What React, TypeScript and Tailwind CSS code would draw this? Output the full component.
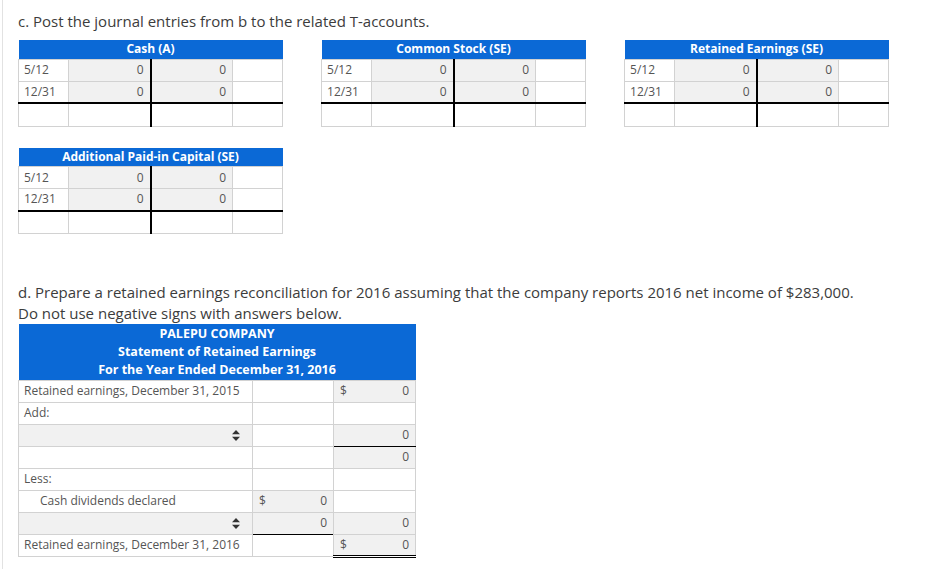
import React from "react";

const cellB = "border border-[#d2d2d2]";

// T-account: header + two posting rows + total row
function TAccount({ title }: { title: string }) {
  return (
    <table className="w-[264px] table-fixed border-collapse text-[12px] text-[#555]">
      <colgroup>
        <col className="w-[50px]" />
        <col className="w-[82px]" />
        <col className="w-[82px]" />
        <col className="w-[50px]" />
      </colgroup>
      <thead>
        <tr>
          <th colSpan={4} className="h-[19px] bg-[#0b69d6] p-0 text-center text-[12px] font-bold text-white">
            {title}
          </th>
        </tr>
      </thead>
      <tbody>
        {["5/12", "12/31"].map((d) => (
          <tr key={d} className="h-[22px]">
            <td className={`${cellB} pl-[5px]`}>{d}</td>
            <td className={`${cellB} border-r-2 border-r-black bg-[#f1f1f1] pr-[6px] text-right`}>0</td>
            <td className={`${cellB} bg-[#f1f1f1] pr-[6px] text-right`}>0</td>
            <td className={cellB}></td>
          </tr>
        ))}
        <tr className="h-[23px]">
          <td className={`${cellB} border-t-2 border-t-black`}></td>
          <td className={`${cellB} border-t-2 border-t-black border-r-2 border-r-black`}></td>
          <td className={`${cellB} border-t-2 border-t-black`}></td>
          <td className={`${cellB} border-t-2 border-t-black`}></td>
        </tr>
      </tbody>
    </table>
  );
}

function UpDown() {
  return (
    <svg viewBox="0 0 8 11" className="h-[11px] w-[8px]" fill="#333">
      <path d="M4 0 8 4.3H0Z" />
      <path d="M4 11 8 6.7H0Z" />
    </svg>
  );
}

type Cell = { text?: string; dollar?: boolean; gray?: boolean; line?: "single" | "double" };
type Row = { label?: string; indent?: boolean; select?: boolean; c2: Cell; c3: Cell };

const rows: Row[] = [
  { label: "Retained earnings, December 31, 2015", c2: {}, c3: { text: "0", dollar: true, gray: true } },
  { label: "Add:", c2: {}, c3: {} },
  { select: true, c2: {}, c3: { text: "0", gray: true, line: "single" } },
  { label: "", c2: {}, c3: { text: "0", gray: true } },
  { label: "Less:", c2: {}, c3: {} },
  { label: "Cash dividends declared", indent: true, c2: { text: "0", dollar: true, gray: true }, c3: {} },
  { select: true, c2: { text: "0", gray: true, line: "single" }, c3: { text: "0", gray: true } },
  { label: "Retained earnings, December 31, 2016", c2: {}, c3: { text: "0", dollar: true, gray: true, line: "double" } },
];

function AmountCell({ c }: { c: Cell }) {
  const line =
    c.line === "single"
      ? "border-b border-b-black"
      : c.line === "double"
        ? "border-b-[3px] border-double border-b-black"
        : "";
  return (
    <td className={`${cellB} ${line} ${c.gray ? "bg-[#f1f1f1]" : ""} px-[6px]`}>
      <div className="flex items-center justify-between">
        <span>{c.dollar ? "$" : ""}</span>
        <span>{c.text ?? ""}</span>
      </div>
    </td>
  );
}

function Statement() {
  return (
    <table className="w-[397px] table-fixed border-collapse text-[12px] text-[#555]">
      <colgroup>
        <col className="w-[234px]" />
        <col className="w-[81px]" />
        <col className="w-[82px]" />
      </colgroup>
      <thead>
        <tr>
          <th colSpan={3} className="h-[56px] bg-[#0b69d6] p-0 text-center text-[12.5px] font-bold leading-[18px] text-white">
            <div>PALEPU COMPANY</div>
            <div>Statement of Retained Earnings</div>
            <div>For the Year Ended December 31, 2016</div>
          </th>
        </tr>
      </thead>
      <tbody>
        {rows.map((r, i) => (
          <tr key={i} className="h-[22px]">
            {r.select ? (
              <td className={`${cellB} bg-[#f1f1f1] pr-[12px]`}>
                <div className="flex justify-end">
                  <UpDown />
                </div>
              </td>
            ) : (
              <td className={`${cellB} ${r.indent ? "pl-[21px]" : "pl-[5px]"} whitespace-nowrap`}>{r.label}</td>
            )}
            <AmountCell c={r.c2} />
            <AmountCell c={r.c3} />
          </tr>
        ))}
      </tbody>
    </table>
  );
}

export default function App() {
  return (
    <div className="h-[569px] w-[951px] overflow-hidden bg-white" style={{ fontFamily: '"Open Sans", sans-serif' }}>
      <div className="ml-[2px] h-full border-l border-[#e2e2e2] pl-[15px] pt-[11px] text-[#3c3c3c]">
        <p className="text-[15px] leading-[21px]">c. Post the journal entries from b to the related T-accounts.</p>
        <div className="mt-[8px] flex gap-[38px]">
          <TAccount title="Cash (A)" />
          <TAccount title="Common Stock (SE)" />
          <TAccount title="Retained Earnings (SE)" />
        </div>
        <div className="mt-[21px]">
          <TAccount title="Additional Paid-in Capital (SE)" />
        </div>
        <p className="mt-[48px] text-[15px] leading-[21px]">
          d. Prepare a retained earnings reconciliation for 2016 assuming that the company reports 2016 net income of $283,000.
          <br />
          Do not use negative signs with answers below.
        </p>
        <Statement />
      </div>
    </div>
  );
}
